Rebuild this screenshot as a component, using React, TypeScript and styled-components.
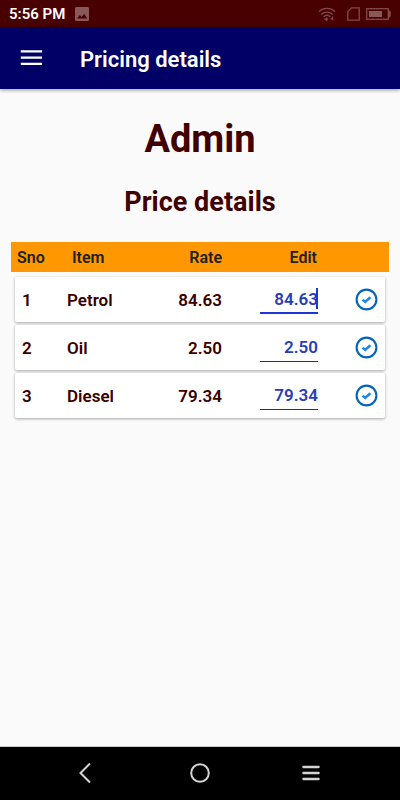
import React, { useState } from "react";
import styled, { createGlobalStyle } from "styled-components";

const GlobalStyle = createGlobalStyle`
  *, *::before, *::after { box-sizing: border-box; }
  body {
    margin: 0;
    background: #fafafa;
    color: #400000;
    font-family: Roboto, "Liberation Sans", sans-serif;
  }
`;

const Screen = styled.div`
  display: flex;
  flex-direction: column;
  min-height: 100vh;
`;

const StatusBar = styled.div`
  display: flex;
  align-items: center;
  gap: 10px;
  height: 27px;
  padding: 0 9px;
  background: #480000;
  color: #fff;
  font-size: 15px;
  font-weight: 600;
  line-height: 20px;
`;

const StatusIcons = styled.div`
  display: flex;
  align-items: center;
  gap: 6px;
  margin-left: auto;
`;

const Signals = styled.div`
  display: flex;
  align-items: center;
  gap: 11px;
`;

const AppBar = styled.header`
  display: flex;
  align-items: center;
  gap: 34px;
  height: 62px;
  padding: 2px 16px 0;
  background: #000066;
  color: #fff;
  box-shadow: 0 1px 4px rgba(0, 0, 0, 0.4);
`;

const IconButton = styled.button`
  display: flex;
  align-items: center;
  justify-content: center;
  margin: 0;
  padding: 0;
  border: 0;
  background: none;
  color: inherit;
  cursor: pointer;
`;

const BarTitle = styled.div`
  padding-top: 1px;
  font-size: 22px;
  font-weight: 600;
  line-height: 28px;
`;

const Content = styled.main`
  flex: 1;
  padding: 28px 11px 0;
`;

const PageTitle = styled.h1`
  margin: 0 0 23px;
  font-size: 38px;
  font-weight: 700;
  line-height: 44px;
  text-align: center;
`;

const SectionTitle = styled.h2`
  margin: 0 0 22px;
  font-size: 27px;
  font-weight: 700;
  line-height: 36px;
  text-align: center;
`;

const PriceTable = styled.table`
  display: block;
`;

const TableHead = styled.thead`
  display: block;
`;

const HeadRow = styled.tr`
  display: grid;
  grid-template-columns: 55px 70fr 80fr 95fr 60px;
  align-items: center;
  height: 30px;
  padding: 1px 12px 0 6px;
  background: #ff9800;
`;

const HeadCell = styled.th<{ $end?: boolean }>`
  padding: 0;
  color: #212121;
  font-size: 16px;
  font-weight: 600;
  line-height: 20px;
  text-align: ${(p) => (p.$end ? "right" : "left")};
`;

const TableBody = styled.tbody`
  display: grid;
  gap: 3px;
  padding: 5px 4px 0;
`;

const CardRow = styled.tr`
  display: grid;
  grid-template-columns: 45px 75fr 80fr 96fr 60px;
  align-items: center;
  height: 45px;
  padding: 0 7px;
  border-radius: 2px;
  background: #fff;
  box-shadow: 0 1px 3px rgba(0, 0, 0, 0.35);
`;

const Cell = styled.td<{ $end?: boolean }>`
  display: flex;
  justify-content: ${(p) => (p.$end ? "flex-end" : "flex-start")};
  padding: 0;
  color: #360000;
  font-size: 17px;
  font-weight: 600;
  line-height: 20px;
`;

const Field = styled.div<{ $active: boolean }>`
  position: relative;
  width: 58px;
  height: 28px;
  border-bottom: ${(p) => (p.$active ? "2px solid #1a35d8" : "1px solid #333")};
`;

const RateInput = styled.input`
  display: block;
  width: 100%;
  height: 26px;
  padding: 0;
  border: 0;
  outline: 0;
  background: none;
  color: #273eb5;
  caret-color: transparent;
  font: inherit;
  text-align: right;
`;

const Caret = styled.span`
  position: absolute;
  top: 2px;
  right: 0;
  width: 2px;
  height: 21px;
  background: #1a35d8;
`;

const NavBar = styled.nav`
  display: grid;
  grid-template-columns: repeat(3, 111px);
  justify-content: center;
  height: 54px;
  padding-bottom: 1px;
  border-top: 1px solid #c4c8c8;
  background: #000;
  color: #d4d4d4;
`;

const PictureIcon = () => (
  <svg width="14" height="14" viewBox="0 0 14 14" aria-hidden="true">
    <rect width="14" height="14" rx="1.5" fill="#895858" />
    <path d="M2 11.5 4.8 8l1.8 2.1L9.2 6.7l3 4.8Z" fill="#480000" />
  </svg>
);

const WifiIcon = () => (
  <svg width="18" height="14" viewBox="0 0 18 14" fill="none" stroke="#824a4a" strokeWidth="1.3" aria-hidden="true">
    <path d="M.8 4.6C5.3.3 12.5.3 17 4.6M3.1 7.4c3.4-3.1 8.2-3.1 11.6 0M5.5 9.8c2-1.8 4.8-1.8 6.8 0" />
    <path d="M8.7 10.5v3l-1.5-1.4h3M14.6 13.2V9.4m-1.4 1.5v1.6" />
  </svg>
);

const SimIcon = () => (
  <svg width="13" height="14" viewBox="0 0 13 14" fill="none" stroke="#824a4a" strokeWidth="1.3" aria-hidden="true">
    <path d="M4.6.8h7.6v12.4H.8V4.7Z" />
  </svg>
);

const BatteryIcon = () => (
  <svg width="25" height="12" viewBox="0 0 25 12" fill="none" aria-hidden="true">
    <rect x=".7" y=".7" width="21.6" height="10.6" stroke="#824a4a" strokeWidth="1.3" />
    <path d="M3 3h13v6H3Z" fill="#895858" />
    <path d="M22.5 2.5h1l1.3 1.3v4.4l-1.3 1.3h-1Z" fill="#824a4a" />
  </svg>
);

const MenuIcon = () => (
  <svg width="30" height="30" viewBox="0 0 30 30" stroke="currentColor" strokeWidth="2.3" aria-hidden="true">
    <path d="M4.8 7.4h21.2M4.8 13.6h21.2M4.8 19.8h21.2" />
  </svg>
);

const CheckIcon = () => (
  <svg width="23" height="23" viewBox="0 0 23 23" fill="none" aria-hidden="true">
    <circle cx="11.5" cy="11.5" r="9.9" stroke="#0763b8" strokeWidth="2.1" />
    <path d="m7.5 11.6 2.7 2.3 5.2-4.7" stroke="#1687f5" strokeWidth="2.5" />
  </svg>
);

const BackIcon = () => (
  <svg width="20" height="24" viewBox="0 0 20 24" fill="none" stroke="currentColor" strokeWidth="2" aria-hidden="true">
    <path d="M11 2.5 1.5 12l9.5 9.5" />
  </svg>
);

const HomeIcon = () => (
  <svg width="24" height="24" viewBox="0 0 24 24" fill="none" stroke="currentColor" strokeWidth="2" aria-hidden="true">
    <circle cx="12" cy="12" r="8.8" />
  </svg>
);

const RecentsIcon = () => (
  <svg width="24" height="24" viewBox="0 0 24 24" fill="none" stroke="currentColor" strokeWidth="2.3" strokeLinecap="round" aria-hidden="true">
    <path d="M4.4 6h15.2M4.4 12h15.2M4.4 18h15.2" />
  </svg>
);

const prices = [
  { item: "Petrol", rate: "84.63" },
  { item: "Oil", rate: "2.50" },
  { item: "Diesel", rate: "79.34" },
];

export default function App() {
  const [values, setValues] = useState(prices.map((p) => p.rate));
  const [active, setActive] = useState(0);

  const update = (index: number, value: string) =>
    setValues((old) => old.map((v, i) => (i === index ? value : v)));

  return (
    <Screen>
      <GlobalStyle />
      <StatusBar>
        <span>5:56 PM</span>
        <PictureIcon />
        <StatusIcons>
          <Signals>
            <WifiIcon />
            <SimIcon />
          </Signals>
          <BatteryIcon />
        </StatusIcons>
      </StatusBar>
      <AppBar>
        <IconButton type="button" aria-label="Open menu">
          <MenuIcon />
        </IconButton>
        <BarTitle>Pricing details</BarTitle>
      </AppBar>
      <Content>
        <PageTitle>Admin</PageTitle>
        <SectionTitle>Price details</SectionTitle>
        <PriceTable>
          <TableHead>
            <HeadRow>
              <HeadCell scope="col">Sno</HeadCell>
              <HeadCell scope="col">Item</HeadCell>
              <HeadCell scope="col" $end>Rate</HeadCell>
              <HeadCell scope="col" $end>Edit</HeadCell>
            </HeadRow>
          </TableHead>
          <TableBody>
            {prices.map((p, i) => (
              <CardRow key={p.item}>
                <Cell>{i + 1}</Cell>
                <Cell>{p.item}</Cell>
                <Cell $end>{p.rate}</Cell>
                <Cell $end>
                  <Field $active={i === active}>
                    <RateInput
                      aria-label={`New rate for ${p.item}`}
                      inputMode="decimal"
                      value={values[i]}
                      onFocus={() => setActive(i)}
                      onChange={(e) => update(i, e.target.value)}
                    />
                    {i === active && <Caret />}
                  </Field>
                </Cell>
                <Cell $end>
                  <IconButton type="button" aria-label={`Save rate for ${p.item}`}>
                    <CheckIcon />
                  </IconButton>
                </Cell>
              </CardRow>
            ))}
          </TableBody>
        </PriceTable>
      </Content>
      <NavBar aria-label="System navigation">
        <IconButton type="button" aria-label="Back">
          <BackIcon />
        </IconButton>
        <IconButton type="button" aria-label="Home">
          <HomeIcon />
        </IconButton>
        <IconButton type="button" aria-label="Recent apps">
          <RecentsIcon />
        </IconButton>
      </NavBar>
    </Screen>
  );
}
